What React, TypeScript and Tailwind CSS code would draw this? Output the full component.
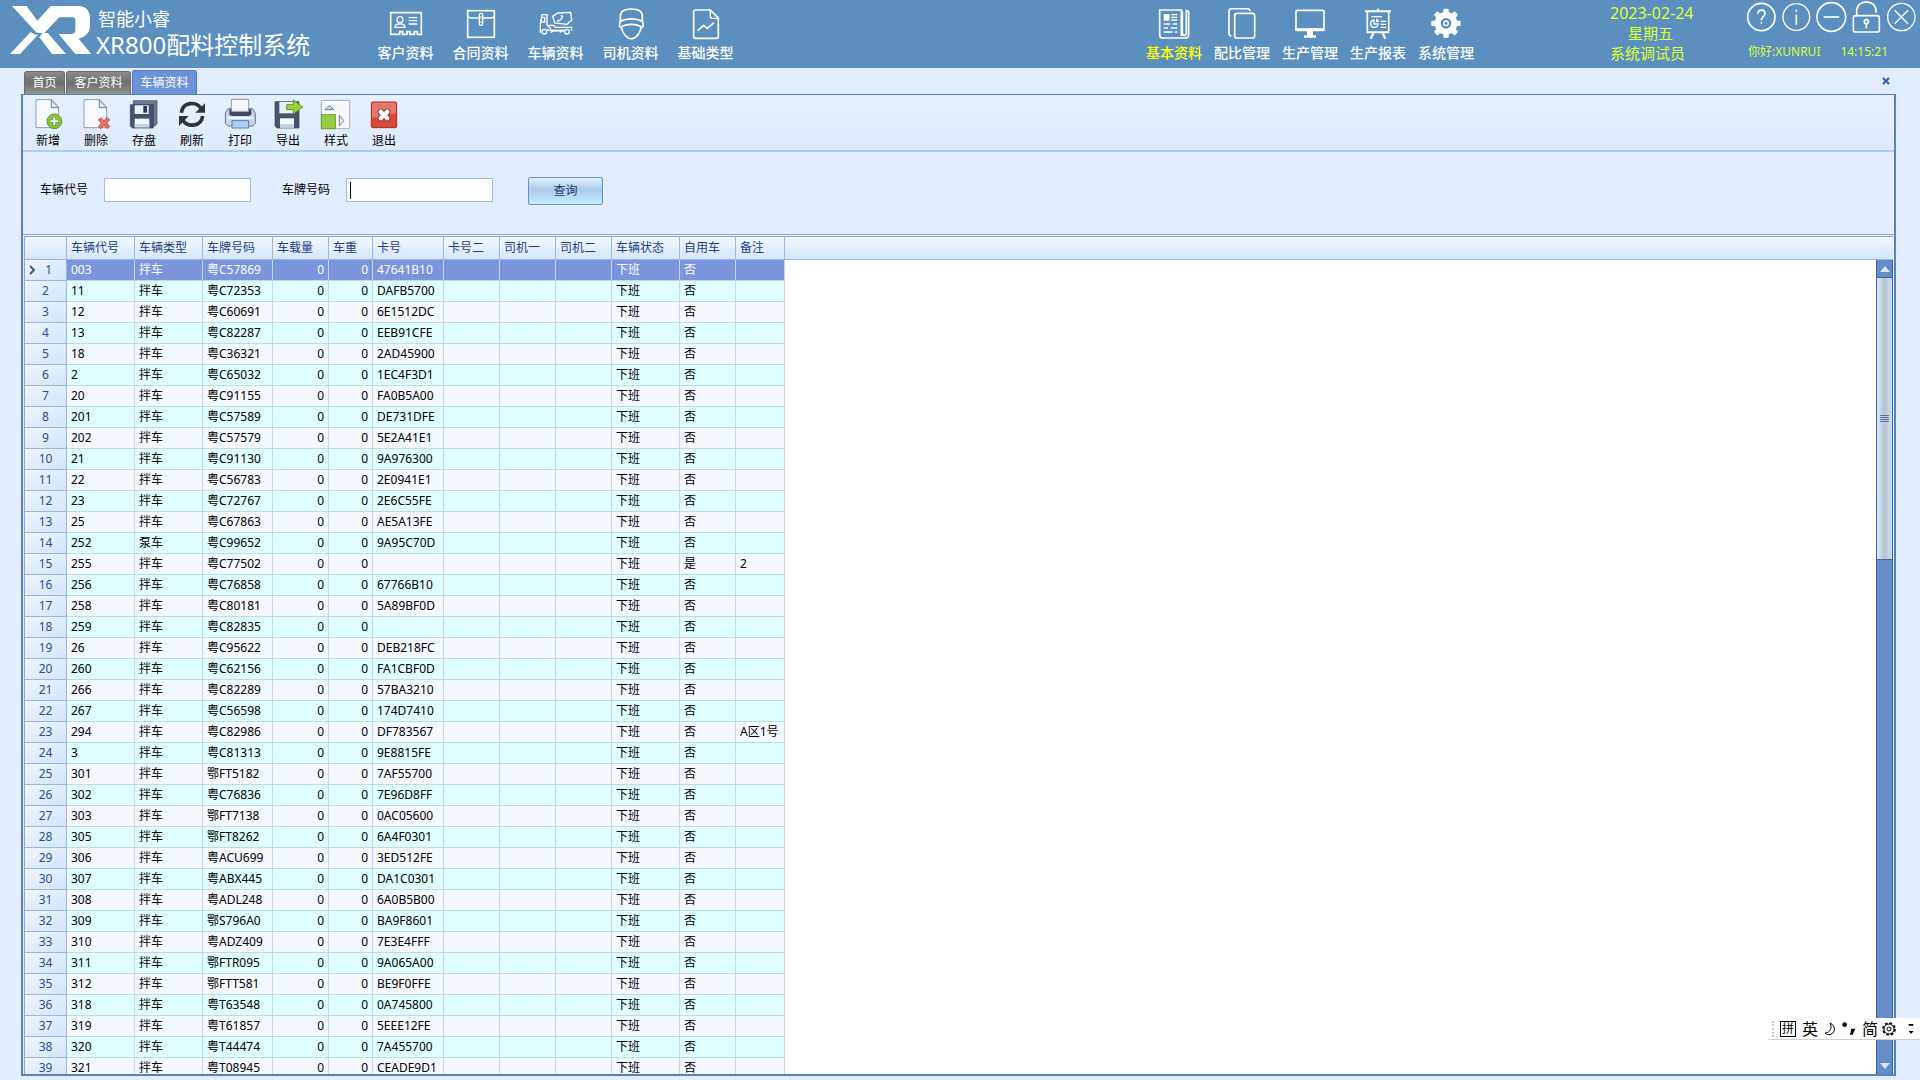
import type { ReactNode } from "react";

type MenuItem = { label: string; icon: ReactNode; active?: boolean };

const COLUMNS = [
  { title: "车辆代号", width: "w-[68px]" },
  { title: "车辆类型", width: "w-[68px]" },
  { title: "车牌号码", width: "w-[70px]" },
  { title: "车载量", width: "w-[56px]" },
  { title: "车重", width: "w-[44px]" },
  { title: "卡号", width: "w-[71px]" },
  { title: "卡号二", width: "w-[56px]" },
  { title: "司机一", width: "w-[56px]" },
  { title: "司机二", width: "w-[56px]" },
  { title: "车辆状态", width: "w-[68px]" },
  { title: "自用车", width: "w-[56px]" },
  { title: "备注", width: "w-[49px]" },
];

// code, plate, card, [type], [own truck], [remark]
const TRUCKS: string[][] = [
  ["003", "粤C57869", "47641B10"],
  ["11", "粤C72353", "DAFB5700"],
  ["12", "粤C60691", "6E1512DC"],
  ["13", "粤C82287", "EEB91CFE"],
  ["18", "粤C36321", "2AD45900"],
  ["2", "粤C65032", "1EC4F3D1"],
  ["20", "粤C91155", "FA0B5A00"],
  ["201", "粤C57589", "DE731DFE"],
  ["202", "粤C57579", "5E2A41E1"],
  ["21", "粤C91130", "9A976300"],
  ["22", "粤C56783", "2E0941E1"],
  ["23", "粤C72767", "2E6C55FE"],
  ["25", "粤C67863", "AE5A13FE"],
  ["252", "粤C99652", "9A95C70D", "泵车"],
  ["255", "粤C77502", "", "拌车", "是", "2"],
  ["256", "粤C76858", "67766B10"],
  ["258", "粤C80181", "5A89BF0D"],
  ["259", "粤C82835", ""],
  ["26", "粤C95622", "DEB218FC"],
  ["260", "粤C62156", "FA1CBF0D"],
  ["266", "粤C82289", "57BA3210"],
  ["267", "粤C56598", "174D7410"],
  ["294", "粤C82986", "DF783567", "拌车", "否", "A区1号"],
  ["3", "粤C81313", "9E8815FE"],
  ["301", "鄂FT5182", "7AF55700"],
  ["302", "粤C76836", "7E96D8FF"],
  ["303", "鄂FT7138", "0AC05600"],
  ["305", "鄂FT8262", "6A4F0301"],
  ["306", "粤ACU699", "3ED512FE"],
  ["307", "粤ABX445", "DA1C0301"],
  ["308", "粤ADL248", "6A0B5B00"],
  ["309", "鄂S796A0", "BA9F8601"],
  ["310", "粤ADZ409", "7E3E4FFF"],
  ["311", "鄂FTR095", "9A065A00"],
  ["312", "鄂FTT581", "BE9F0FFE"],
  ["318", "粤T63548", "0A745800"],
  ["319", "粤T61857", "5EEE12FE"],
  ["320", "粤T44474", "7A455700"],
  ["321", "粤T08945", "CEADE9D1"],
];

function HeadIcon({ children }: { children: ReactNode }) {
  return (
    <svg viewBox="0 0 108 96" className="h-8 w-9" fill="none" stroke="#fff" strokeWidth="5" aria-hidden="true">
      {children}
    </svg>
  );
}

function ToolIcon({ children }: { children: ReactNode }) {
  return (
    <svg viewBox="0 0 96 96" className="size-8" fill="none" aria-hidden="true">
      {children}
    </svg>
  );
}

const dataMenu: MenuItem[] = [
  {
    label: "客户资料",
    icon: (
      <HeadIcon>
        <path d="M8 14H100V79H88V71H79V79H66V71H57V79H44V71H35V79H8Z" />
        <circle cx="36" cy="35" r="9" strokeWidth="4" />
        <path d="M21 58c0-14 30-14 30 0z" strokeWidth="4" />
        <path d="M62 29H88M62 38H88M62 48H88" strokeWidth="4" />
      </HeadIcon>
    ),
  },
  {
    label: "合同资料",
    icon: (
      <HeadIcon>
        <rect x="14" y="8" width="80" height="80" />
        <path d="M14 23q3 7 12 7H82q9 0 12-7" strokeWidth="4" />
        <rect x="49" y="16" width="10" height="36" rx="5" fill="#5a8fbf" strokeWidth="4" />
        <path d="M54 24V34M54 40V45" strokeWidth="3" />
      </HeadIcon>
    ),
  },
  {
    label: "车辆资料",
    icon: (
      <HeadIcon>
        <g strokeWidth="4">
          <path d="M10 72H7V46L12 20H27V50L38 62V66H27" />
          <path d="M12 28L9 42H20V28Z" />
          <path d="M44 25L60 15L98 13L101 36L87 49L50 45Z" />
          <path d="M56 38c6 4 10-2 14-6s6-10-2-8" />
          <path d="M32 52H46L52 58H101V66H98" />
          <path d="M38 68H78" strokeWidth="6" />
          <circle cx="19" cy="71" r="7" />
          <circle cx="87" cy="71" r="7" />
          <path d="M38 74L44 68M66 74L70 68" />
        </g>
      </HeadIcon>
    ),
  },
  {
    label: "司机资料",
    icon: (
      <HeadIcon>
        <path d="M22 38V24C22 9 36 3 55 3s33 6 33 21V38" />
        <path d="M22 40C40 30 70 30 88 40" />
        <path d="M22 38L19 54L25 60M88 38L91 54L85 60" />
        <path d="M23 58C40 46 70 46 87 58" />
        <path d="M25 58C30 80 44 93 55 93S80 80 85 58" />
      </HeadIcon>
    ),
  },
  {
    label: "基础类型",
    icon: (
      <HeadIcon>
        <path d="M21 6H67L91 30V86q0 5-5 5H22q-5 0-5-5V11q0-5 5-5Z" />
        <path d="M67 6V25q0 6 6 6H91" strokeWidth="4" />
        <path d="M29 68L47 52L58 61L78 44" />
      </HeadIcon>
    ),
  },
];

const systemMenu: MenuItem[] = [
  {
    label: "基本资料",
    active: true,
    icon: (
      <HeadIcon>
        <path d="M76 84V6H11V80q0 10 10 10H86q12 0 12-10V14q0-6-7-6V76q0 6-6 6t-6-6V10" />
        <rect x="23" y="18" width="18" height="20" fill="#fff" stroke="none" />
        <path d="M46 20H64M46 28H64M46 36H64M23 48H43M50 48H64M23 60H36M44 60H64M23 72H50M56 72H64" strokeWidth="4" />
      </HeadIcon>
    ),
  },
  {
    label: "配比管理",
    icon: (
      <HeadIcon>
        <path d="M22 84q-7 0-7-8V10q0-8 8-8H70q8 0 8 8" />
        <rect x="32" y="16" width="60" height="74" rx="7" />
      </HeadIcon>
    ),
  },
  {
    label: "生产管理",
    icon: (
      <HeadIcon>
        <rect x="12" y="7" width="84" height="60" rx="4" />
        <path d="M12 63H96V66H12Z" />
        <path d="M45 68H63V82H72V89H36V82H45Z" fill="#fff" stroke="none" />
      </HeadIcon>
    ),
  },
  {
    label: "生产报表",
    icon: (
      <HeadIcon>
        <path d="M15 10H93M20 73H88" strokeWidth="6" />
        <path d="M22 12V70M86 12V70" />
        <path d="M54 2V10M40 76L32 92M68 76L76 92" strokeWidth="7" />
        <path d="M34 26H66" strokeWidth="4" />
        <path d="M42 36A11 11 0 1 0 54 48H42Z" strokeWidth="4" />
        <path d="M48 32A10 10 0 0 1 57 42H48Z" fill="#fff" stroke="none" />
        <path d="M62 40H78M62 49H78M62 58H78" strokeWidth="4" />
      </HeadIcon>
    ),
  },
  {
    label: "系统管理",
    icon: (
      <HeadIcon>
        <circle cx="54" cy="46" r="25" strokeWidth="18" />
        {[0, 45, 90, 135, 180, 225, 270, 315].map((a) => (
          <rect key={a} x="46" y="2" width="16" height="16" rx="3" fill="#fff" stroke="none" transform={`rotate(${a} 54 46)`} />
        ))}
        <circle cx="54" cy="46" r="7" strokeWidth="4" />
      </HeadIcon>
    ),
  },
];

const floppy = (
  <>
    <path d="M9 11H81V90H15L9 84Z" fill="#46536f" stroke="#323e58" strokeWidth="2" />
    <rect x="22" y="12" width="44" height="34" fill="#e9eef6" />
    <rect x="24" y="61" width="42" height="28" fill="#f5f8fc" />
    <path d="M24 78H66V89H24Z" fill="#c3d3e6" />
  </>
);

const page = (
  <>
    <path d="M12 5H58L80 29V89H12Z" fill="#f7f9fe" stroke="#8f9cc4" strokeWidth="3" />
    <path d="M58 5V29H80Z" fill="#dfe6f5" stroke="#6f7fb0" strokeWidth="3" />
  </>
);

const tools: MenuItem[] = [
  {
    label: "新增",
    icon: (
      <ToolIcon>
        {page}
        <circle cx="67" cy="70" r="22" fill="#8cc63a" stroke="#5c9a24" strokeWidth="3" />
        <path d="M67 57V83M54 70H80" stroke="#4f8a1d" strokeWidth="10" />
        <path d="M67 58V82M55 70H79" stroke="#fff" strokeWidth="6" />
      </ToolIcon>
    ),
  },
  {
    label: "删除",
    icon: (
      <ToolIcon>
        {page}
        <path d="M58 62L86 89M86 62L58 89" stroke="#b83a30" strokeWidth="12" />
        <path d="M59 63L85 88M85 63L59 88" stroke="#ea7468" strokeWidth="8" />
      </ToolIcon>
    ),
  },
  {
    label: "存盘",
    icon: (
      <ToolIcon>
        <path d="M16 8H87V78L80 84H16Z" fill="#6c7893" stroke="#3c4864" strokeWidth="2" />
        <path d="M7 20H76V90H13L7 84Z" fill="#46536f" stroke="#323e58" strokeWidth="2" />
        <rect x="20" y="22" width="42" height="26" fill="#eef2f8" />
        <rect x="46" y="24" width="11" height="20" fill="#2c3650" />
        <rect x="20" y="62" width="44" height="26" fill="#f5f8fc" />
        <path d="M20 78H64V88H20Z" fill="#c3d3e6" />
      </ToolIcon>
    ),
  },
  {
    label: "刷新",
    icon: (
      <ToolIcon>
        <path d="M16 44C20 12 60 8 76 32" stroke="#333" strokeWidth="11" />
        <path d="M87 16V44H58Z" fill="#333" />
        <path d="M80 54C76 86 36 90 20 66" stroke="#333" strokeWidth="11" />
        <path d="M9 84V54H38Z" fill="#333" />
      </ToolIcon>
    ),
  },
  {
    label: "打印",
    icon: (
      <ToolIcon>
        <path d="M12 32H86L94 46V76L86 84H12L4 76V46Z" fill="#c8d4e8" stroke="#63759b" strokeWidth="3" />
        <path d="M22 4H74V40H22Z" fill="#f4f7fd" stroke="#8b9bc0" strokeWidth="3" />
        <path d="M16 34H22V42H74V34H82V50L74 54H24L16 50Z" fill="#3d4a66" />
        <path d="M10 60H88" stroke="#f4f7fd" strokeWidth="7" />
        <path d="M24 68H74V90H24Z" fill="#a9d2f0" stroke="#4f7fae" strokeWidth="3" />
      </ToolIcon>
    ),
  },
  {
    label: "导出",
    icon: (
      <ToolIcon>
        {floppy}
        <path d="M44 20H64V6L92 27L64 48V35H44Z" fill="#9bd33c" stroke="#5e9a20" strokeWidth="3" />
      </ToolIcon>
    ),
  },
  {
    label: "样式",
    icon: (
      <ToolIcon>
        <rect x="4" y="7" width="85" height="85" rx="3" fill="#f6f8fc" stroke="#a3adbd" strokeWidth="3" />
        <rect x="4" y="50" width="42" height="42" fill="#97cc43" stroke="#6fa52a" strokeWidth="3" />
        <path d="M14 35H42L28 23Z" fill="#cdd3dd" stroke="#75809a" strokeWidth="3" />
        <path d="M58 52V84L71 68Z" fill="#e6e9ef" stroke="#75809a" strokeWidth="3" />
      </ToolIcon>
    ),
  },
  {
    label: "退出",
    icon: (
      <ToolIcon>
        <rect x="10" y="12" width="76" height="77" rx="4" fill="#d9493c" stroke="#a92b22" strokeWidth="3" />
        <path d="M12 14H84V46Q48 54 12 60Z" fill="#e4776c" />
        <path d="M38 41L58 61M58 41L38 61" stroke="#98261e" strokeWidth="18" strokeLinecap="round" />
        <path d="M38 41L58 61M58 41L38 61" stroke="#fff" strokeWidth="13" strokeLinecap="round" />
      </ToolIcon>
    ),
  },
];

const windowIcons: MenuItem[] = [
  {
    label: "帮助",
    icon: (
      <>
        <circle cx="52" cy="51" r="41" />
        <path d="M42 41c0-14 21-14 21 0c0 9-11 9-11 20M52 66V72" />
      </>
    ),
  },
  {
    label: "关于",
    icon: (
      <>
        <circle cx="52" cy="51" r="40" strokeWidth="4" />
        <path d="M52 44V74M52 29V35" />
      </>
    ),
  },
  {
    label: "最小化",
    icon: (
      <>
        <circle cx="52" cy="51" r="43" />
        <path d="M29 51H76" />
      </>
    ),
  },
  {
    label: "锁定",
    icon: (
      <>
        <rect x="13" y="47" width="78" height="49" rx="7" />
        <path d="M23 47V34C23 -4 81 -4 81 34V38" />
        <circle cx="52" cy="65" r="6" />
        <path d="M52 71V85" />
      </>
    ),
  },
  {
    label: "关闭",
    icon: (
      <>
        <circle cx="52" cy="51" r="41" strokeWidth="4" />
        <path d="M32 31L72 71M72 31L32 71" strokeWidth="4" />
      </>
    ),
  },
];

function Logo() {
  return (
    <svg viewBox="30 15 246 150" className="h-[50px] w-[82px]" fill="#fff" aria-hidden="true">
      <path d="M36 18H80L112 62L152 18H236Q270 20 270 56V82Q268 108 236 116L274 162H226L176 102H216Q226 100 226 90V62Q226 52 216 52H178L132 100L110 98Z" />
      <path d="M106 104L114 104L60 162H30L84 104L92 96Z" />
      <path d="M128 98L144 100L198 162H156L118 112Z" />
    </svg>
  );
}

function Header() {
  return (
    <header className="flex h-17 shrink-0 items-start bg-[#5a8fbf] text-white">
      <div className="flex w-[368px] items-start pl-[10px] pt-[5px]">
        <Logo />
        <h1 className="ml-1 font-normal">
          <span className="block pl-[2px] text-[18px] leading-7">智能小睿</span>
          <span className="block text-[24px] leading-6">XR800配料控制系统</span>
        </h1>
      </div>
      <nav className="flex pt-2">
        {dataMenu.map((item) => (
          <button key={item.label} className="flex w-[75px] flex-col items-center text-[14px] leading-[26px] font-medium">
            {item.icon}
            {item.label}
          </button>
        ))}
      </nav>
      <nav className="ml-auto flex pt-2">
        {systemMenu.map((item) => (
          <button
            key={item.label}
            className={`flex w-[68px] flex-col items-center text-[14px] leading-[26px] font-medium ${item.active ? "text-[#ffff00]" : ""}`}
          >
            {item.icon}
            {item.label}
          </button>
        ))}
      </nav>
      <div className="ml-[130px] w-[134px] pt-[3px] text-[15px] leading-5 text-[#ddff33]">
        <p className="text-[16px]">2023-02-24</p>
        <p className="pl-[18px]">星期五</p>
        <p>系统调试员</p>
      </div>
      <div className="w-44 text-[12px] text-[#ddff33]">
        <div className="flex">
          {windowIcons.map((item) => (
            <button key={item.label} aria-label={item.label}>
              <svg viewBox="0 0 105 102" className="h-[34px] w-[35px]" fill="none" stroke="#fff" strokeWidth="5">
                {item.icon}
              </svg>
            </button>
          ))}
        </div>
        <div className="flex justify-between pr-8 pl-1 pt-[9px] leading-[18px]">
          <span>你好:XUNRUI</span>
          <span>14:15:21</span>
        </div>
      </div>
    </header>
  );
}

function TabStrip() {
  return (
    <div className="flex h-[26px] shrink-0 items-end gap-px pr-[30px] pl-6 text-[12px] text-white">
      <button className="h-[23px] w-[41px] rounded-t-[3px] border border-b-0 border-[#6b6b6b] bg-linear-to-b from-[#8b8b8b] via-[#6f6f6f] to-[#949494]">首页</button>
      <button className="h-[23px] w-[65px] rounded-t-[3px] border border-b-0 border-[#6b6b6b] bg-linear-to-b from-[#8b8b8b] via-[#6f6f6f] to-[#949494]">客户资料</button>
      <button className="h-6 w-[65px] rounded-t-[3px] border border-b-0 border-[#4f78c0] bg-[#6b94d6]">车辆资料</button>
      <button aria-label="关闭" className="mb-[9px] ml-auto">
        <svg viewBox="0 0 24 24" className="size-2" stroke="#3a62a8" strokeWidth="7">
          <path d="M3 3L21 21M21 3L3 21" />
        </svg>
      </button>
    </div>
  );
}

function SearchBar() {
  return (
    <form className="flex h-[82px] shrink-0 items-center pb-1.5 pl-[17px] text-[12px]">
      <label htmlFor="code" className="mr-4 w-12">车辆代号</label>
      <input id="code" className="h-6 w-[147px] border border-[#a3bbdf] bg-white px-1 outline-none" />
      <label htmlFor="plate" className="mr-4 ml-[31px] w-12">车牌号码</label>
      <div className="flex h-6 w-[147px] items-center border border-[#a3bbdf] bg-white pl-[3px]">
        <span className="h-[17px] w-px bg-black" />
        <input id="plate" className="w-full outline-none" />
      </div>
      <button
        type="button"
        className="mt-0.5 ml-[35px] h-7 w-[75px] rounded-[2px] border border-[#6b90c8] bg-linear-to-b from-[#e4edf9] from-0% via-[#a9ccee] via-45% to-[#c6ecfc] text-[#1e3c78]"
      >
        查询
      </button>
    </form>
  );
}

function Grid() {
  return (
    <div className="min-w-0 flex-1 overflow-hidden bg-white">
      <table className="w-full table-fixed border-separate border-spacing-0 text-left text-[12px] leading-4">
        <thead>
          <tr className="h-[23px] bg-linear-to-b from-[#f4f8fe] to-[#d3e5fb] text-[#1e3f86]">
            <th className="w-[42px] border-r border-b border-[#9fb6dc]"></th>
            {COLUMNS.map((c) => (
              <th key={c.title} className={`${c.width} border-r border-b border-[#9fb6dc] px-1 py-0 font-normal whitespace-nowrap`}>
                {c.title}
              </th>
            ))}
            <th className="border-b border-[#9fb6dc]"></th>
          </tr>
        </thead>
        <tbody>
          {TRUCKS.map(([code, plate, card, type = "拌车", own = "否", remark = ""], i) => {
            const cells = [code, type, plate, "0", "0", card, "", "", "", "下班", own, remark];
            const selected = i === 0;
            const tone = selected
              ? "bg-[#7b94de] text-white"
              : i % 2
                ? "bg-[#dfffff] text-black"
                : "bg-[#f4f8ff] text-black";
            return (
              <tr key={code} className="h-[21px]">
                <td className="border-r border-b border-[#9fb6dc] bg-linear-to-br from-[#f0f6fe] to-[#d3e4fb] p-0 text-center text-[#2c4f92]">
                  {selected ? (
                    <span className="flex items-center justify-between pr-3.5 pl-1">
                      <svg viewBox="0 0 8 10" className="h-[10px] w-2" fill="none" stroke="#3f5a8c" strokeWidth="2" aria-hidden="true">
                        <path d="M1 1L5 5L1 9" />
                      </svg>
                      1
                    </span>
                  ) : (
                    i + 1
                  )}
                </td>
                {cells.map((value, c) => (
                  <td
                    key={c}
                    className={`border-r border-b border-[#c3d9ea] px-1 py-0 whitespace-nowrap ${tone} ${c === 3 || c === 4 ? "text-right" : ""}`}
                  >
                    {value}
                  </td>
                ))}
                <td></td>
              </tr>
            );
          })}
        </tbody>
      </table>
    </div>
  );
}

function ScrollBar() {
  return (
    <div className="flex w-[17px] shrink-0 flex-col">
      <div className="h-[23px] shrink-0 border-b border-[#9fb6dc] bg-linear-to-b from-[#f4f8fe] to-[#d3e5fb]" />
      <div className="flex flex-1 flex-col border-x border-[#3c659f] bg-[#658ec9]">
        <button aria-label="向上滚动" className="flex h-[18px] items-center justify-center border-b border-[#3c659f]">
          <svg viewBox="0 0 10 6" className="h-[6px] w-[10px]" fill="#d5e6fa"><path d="M0 6L5 0L10 6Z" /></svg>
        </button>
        <div className="flex h-[282px] flex-col items-center justify-center gap-px border-b border-[#3c659f] bg-linear-to-r from-[#dfe8f3] via-[#b5c3d6] to-[#cfdcea]">
          <span className="h-px w-[9px] bg-[#5577a8]" />
          <span className="h-px w-[9px] bg-[#5577a8]" />
          <span className="h-px w-[9px] bg-[#5577a8]" />
          <span className="h-px w-[9px] bg-[#5577a8]" />
        </div>
        <button aria-label="向下滚动" className="mt-auto flex h-4 items-center justify-center">
          <svg viewBox="0 0 10 6" className="h-[6px] w-[10px]" fill="#d5e6fa"><path d="M0 0L5 6L10 0Z" /></svg>
        </button>
      </div>
    </div>
  );
}

function ImeBar() {
  return (
    <div className="fixed right-0 bottom-10 flex h-[22px] w-[152px] items-center border-b border-[#cfcfcf] bg-white text-[16px] leading-5 text-black">
      <span className="ml-1 h-4 border-l-2 border-dotted border-[#c8c8c8]" />
      <span className="ml-1.5 flex size-4 items-center justify-center border border-black text-[12px]">拼</span>
      <span className="ml-1.5">英</span>
      <svg viewBox="0 0 36 42" className="ml-1.5 h-[14px] w-3" fill="none" stroke="#000" strokeWidth="3" aria-hidden="true">
        <path d="M18 3C38 12 34 38 14 38Q8 38 3 33C18 32 26 18 18 3Z" />
      </svg>
      <svg viewBox="0 0 42 42" className="ml-1.5 size-[14px]" aria-hidden="true">
        <circle cx="8" cy="8" r="7" />
        <path d="M28 20H40L32 38H24Z" />
      </svg>
      <span className="ml-1.5">简</span>
      <svg viewBox="0 0 42 42" className="ml-1 size-[14px]" fill="none" stroke="#000" aria-hidden="true">
        <circle cx="21" cy="21" r="18" strokeWidth="5" strokeDasharray="8 6" />
        <circle cx="21" cy="21" r="15" strokeWidth="3" />
        <circle cx="21" cy="21" r="6" strokeWidth="3" />
      </svg>
      <svg viewBox="0 0 18 36" className="ml-3 h-3 w-[6px]" aria-hidden="true">
        <path d="M2 3H16V8H2ZM2 24H17L9 33Z" />
      </svg>
    </div>
  );
}

export default function App() {
  return (
    <div className="flex h-screen flex-col overflow-hidden bg-[#e2edff] font-['Noto_Sans','Noto_Sans_CJK_SC',sans-serif] text-black">
      <Header />
      <TabStrip />
      <main className="mr-6 mb-1 ml-[21px] flex min-h-0 flex-1 flex-col border-2 border-t border-[#5b80c2]">
        <div className="flex h-[57px] shrink-0 border-b-2 border-[#aecbee] bg-linear-to-b from-[#e6f0ff] to-[#dfebfd] pt-[3px] pl-px">
          {tools.map((tool) => (
            <button key={tool.label} className="flex w-12 flex-col items-center gap-0.5 text-[12px] leading-[18px]">
              {tool.icon}
              {tool.label}
            </button>
          ))}
        </div>
        <SearchBar />
        <div className="flex min-h-0 flex-1 border-t border-[#8fa9d6] p-px pb-0">
          <div className="flex min-w-0 flex-1 border-t border-l border-[#8fa9d6]">
            <Grid />
            <ScrollBar />
          </div>
        </div>
      </main>
      <ImeBar />
    </div>
  );
}
